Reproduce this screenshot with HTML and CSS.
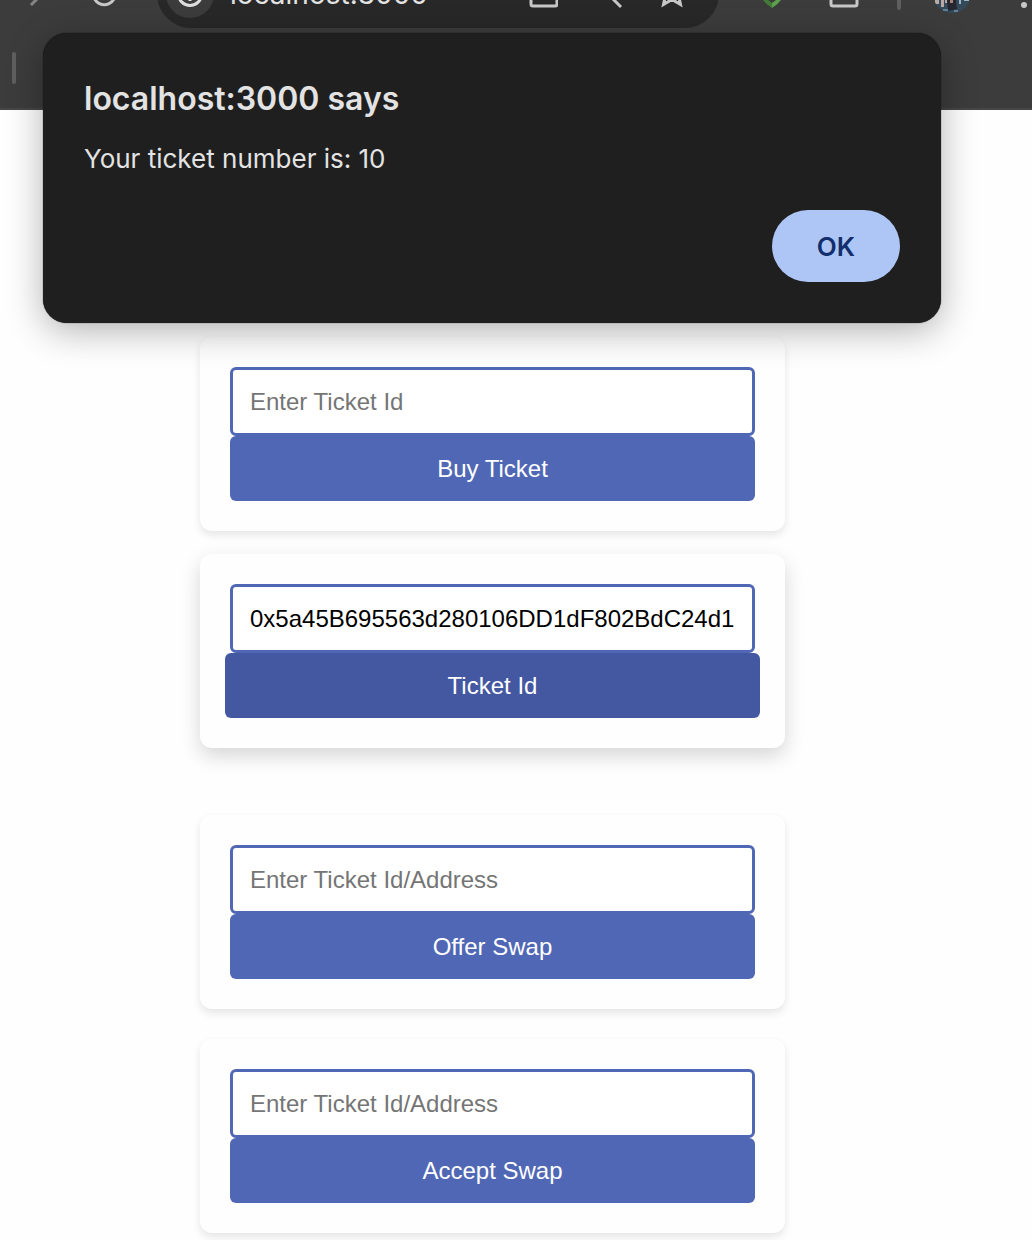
FILE: index.html
```html
<!DOCTYPE html>
<html lang="en">
<head>
<meta charset="utf-8">
<meta name="viewport" content="width=device-width, initial-scale=1">
<title>Tickets</title>
<link rel="stylesheet" href="styles.css">
</head>
<body>
<header class="browser">
  <div class="toolbar">
    <svg class="forward" width="24" height="32" viewBox="0 0 24 32" aria-hidden="true"><path d="M9 27 L20 16 L9 5" fill="none" stroke="#858585" stroke-width="3"/></svg>
    <svg class="reload" width="28" height="28" viewBox="0 0 28 28" aria-hidden="true"><path d="M23 7 A11 11 0 1 0 25 16" fill="none" stroke="#c7c7c7" stroke-width="3"/></svg>
    <div class="address">
      <span class="site-info"><svg width="28" height="28" viewBox="0 0 28 28" aria-hidden="true"><circle cx="14" cy="14" r="11.500" fill="none" stroke="#dedede" stroke-width="3"/><path d="M14 12v9" stroke="#dedede" stroke-width="3"/></svg></span>
      <span class="url">localhost:3000</span>
      <svg width="30" height="30" viewBox="0 0 30 30" aria-hidden="true"><rect x="3" y="1" width="26" height="26" rx="2" fill="none" stroke="#c7c7c7" stroke-width="3"/></svg>
      <svg class="search" width="36" height="32" viewBox="0 0 36 32" aria-hidden="true"><circle cx="15" cy="9" r="8" fill="none" stroke="#c7c7c7" stroke-width="3"/><path d="M21 15 L35 29" stroke="#c7c7c7" stroke-width="3"/></svg>
      <svg width="36" height="36" viewBox="0 0 36 36" aria-hidden="true"><path d="M18 3 L22 12 L32 13 L24.500 19 L26.500 28.500 L18 23.500 L9.500 28.500 L11.500 19 L4 13 L14 12 Z" fill="none" stroke="#c7c7c7" stroke-width="3"/></svg>
    </div>
    <div class="tools">
      <svg width="36" height="32" viewBox="0 0 36 32" aria-hidden="true"><path d="M17 30 Q3 22 3 4 L17 1 V5 L7 7 Q7 19 17 25 Z" fill="#437c3a"/><path d="M17 30 Q31 22 31 4 L17 1 V5 L27 7 Q27 19 17 25 Z" fill="#5da14c"/></svg>
      <svg width="30" height="30" viewBox="0 0 30 30" aria-hidden="true"><rect x="2" y="1" width="26" height="26" rx="2" fill="none" stroke="#c7c7c7" stroke-width="3"/></svg>
      <span class="divider"></span>
    </div>
    <svg class="avatar" width="38" height="38" viewBox="0 0 38 38" aria-hidden="true">
      <defs><clipPath id="round"><circle cx="19" cy="19" r="19"/></clipPath></defs>
      <g clip-path="url(#round)"><path fill="#344a5b" d="M0 0h38v38H0z"/><path fill="#b8a9a4" d="M2 22h4v7H2zM8 24h3v8H8zM12 23h2v5h-2z"/><path fill="#9fb4c1" d="M26 22h2v7h-2zM31 23h5v3h-5z"/><path fill="#252730" d="M14 24l4-3 5 4 1 9-9 2z"/><path fill="#a68377" d="M17 23h3v5h-3z"/><path fill="#5f8294" d="M10 34h5v2h-5zM21 35h4v2h-4z"/></g>
    </svg>
    <svg class="menu" width="8" height="32" viewBox="0 0 8 32" aria-hidden="true"><g fill="#c7c7c7"><circle cx="4" cy="5" r="3"/><circle cx="4" cy="16" r="3"/><circle cx="4" cy="27" r="3"/></g></svg>
  </div>
  <div class="bookmarks"><span class="divider"></span></div>
</header>

<main class="page">
  <form class="card">
    <input class="field" type="text" placeholder="Enter Ticket Id" aria-label="Ticket Id">
    <button class="action" type="button">Buy Ticket</button>
  </form>
  <form class="card card-raised">
    <input class="field" type="text" value="0x5a45B695563d280106DD1dF802BdC24d1" aria-label="Owner address">
    <button class="action action-hovered" type="button">Ticket Id</button>
  </form>
  <form class="card">
    <input class="field" type="text" placeholder="Enter Ticket Id/Address" aria-label="Ticket Id or address to offer">
    <button class="action" type="button">Offer Swap</button>
  </form>
  <form class="card">
    <input class="field" type="text" placeholder="Enter Ticket Id/Address" aria-label="Ticket Id or address to accept">
    <button class="action" type="button">Accept Swap</button>
  </form>
</main>

<dialog class="alert" open aria-labelledby="alert-title">
  <h1 class="alert-title" id="alert-title">localhost:3000 says</h1>
  <p class="alert-message">Your ticket number is: 10</p>
  <button class="alert-ok" type="button">OK</button>
</dialog>
</body>
</html>
```
FILE: styles.css
```css
* {
  box-sizing: border-box;
}

body {
  margin: 0;
  background: #fefefe;
  font-family: "Liberation Sans", Arial, sans-serif;
}

/* Browser bar, scrolled partly out of view */
.browser {
  overflow: hidden;
  background: #3c3c3c;
  border-bottom: 2px solid #474545;
  font-family: Inter, sans-serif;
}

.toolbar {
  display: flex;
  align-items: center;
  height: 68px;
  margin-top: -40px;
  padding: 0 4px 0 22px;
}

.toolbar svg {
  flex: none;
}

.reload {
  margin: 0 39px 0 44px;
}

.address {
  display: flex;
  flex: 1;
  align-items: center;
  gap: 28px;
  height: 68px;
  padding: 0 29px 0 9px;
  border-radius: 34px;
  background: #282828;
}

.site-info {
  display: grid;
  place-items: center;
  width: 48px;
  height: 48px;
  margin-right: -12px;
  border-radius: 50%;
  background: #3c3c3c;
}

.url {
  flex: 1;
  color: #e3e3e3;
  font-size: 28px;
  line-height: 32px;
}

.search {
  margin-right: 4px;
}

.tools {
  display: flex;
  align-items: center;
  gap: 38px;
  margin: 0 32px 0 36px;
}

.divider {
  width: 4px;
  height: 32px;
  border-radius: 2px;
  background: #5f5f5f;
}

.menu {
  margin-left: 49px;
}

.bookmarks {
  display: flex;
  align-items: center;
  height: 80px;
  padding: 0 12px;
}

/* Ticket forms */
.page {
  display: flex;
  flex-direction: column;
  gap: 30px;
  padding: 227px 247px 8px 200px;
}

.card {
  display: flex;
  flex-direction: column;
  padding: 30px;
  border-radius: 12px;
  background: #fefefe;
  box-shadow: 0 4px 8px rgba(0, 0, 0, 0.1);
}

.card-raised {
  margin: -7px 0 37px;
  box-shadow: 0 8px 20px rgba(0, 0, 0, 0.16);
}

.field {
  width: 100%;
  height: 69px;
  padding: 0 17px;
  border: 3px solid #5067b5;
  border-radius: 6px;
  background: #fff;
  color: #000;
  font: 24px "Liberation Sans", Arial, sans-serif;
}

.field::placeholder {
  color: #757575;
}

.action {
  height: 65px;
  padding: 0 18px;
  border: 0;
  border-radius: 6px;
  background: #5067b5;
  color: #fff;
  font: 24px "Liberation Sans", Arial, sans-serif;
}

.action-hovered {
  margin: 0 -5px;
  background: #4458a1;
}

/* Alert dialog */
.alert {
  position: absolute;
  top: 33px;
  right: 91px;
  left: 43px;
  display: flex;
  flex-direction: column;
  width: auto;
  margin: 0;
  padding: 40px 41px 41px;
  border: 0;
  border-radius: 24px;
  background: #1f1f1f;
  box-shadow: 0 0 1px #000, 0 8px 36px rgba(0, 0, 0, 0.3);
  color: #e3e3e3;
  font-family: Inter, sans-serif;
}

.alert-title {
  margin: 0;
  font-size: 32px;
  font-weight: 600;
  line-height: 52px;
}

.alert-message {
  margin: 14px 0 31px;
  font-size: 26px;
  line-height: 40px;
}

.alert-ok {
  align-self: flex-end;
  width: 128px;
  height: 72px;
  border: 0;
  border-radius: 36px;
  background: #aec6f6;
  color: #122e6c;
  font: 600 26px Inter, sans-serif;
}
```
